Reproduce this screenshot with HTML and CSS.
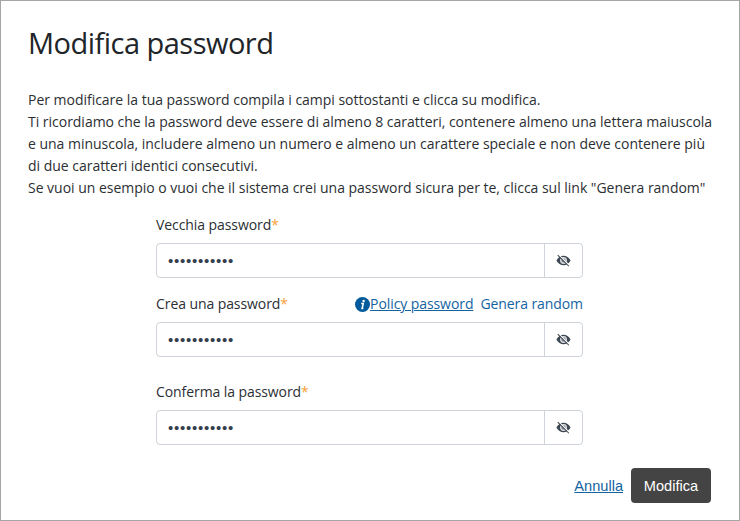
FILE: index.html
```html
<!DOCTYPE html>
<html lang="it">

<head>
  <meta charset="UTF-8">
  <meta name="viewport" content="width=device-width, initial-scale=1.0">
  <title>Modifica password</title>
  <link rel="stylesheet" href="styles.css">
</head>

<body>
  <svg class="sprite" xmlns="http://www.w3.org/2000/svg">
    <symbol id="eye-slash" viewBox="0 0 16 14">
      <path d="M0.4 7C3.6 0.2 12.4 0.2 15.6 7C12.4 13.8 3.6 13.8 0.4 7Z" fill="#3d4653"/>
      <circle cx="8" cy="7" r="3.7" fill="#dfe1e4"/>
      <circle cx="8" cy="7" r="2.4" fill="#8b9097"/>
      <path d="M2.6 0.6L14.4 12.4" stroke="#fff" stroke-width="1.2"/>
      <path d="M1.8 1.2L13.8 13.2" stroke="#3d4653" stroke-width="1.1"/>
    </symbol>
  </svg>

  <main class="page">
    <h1>Modifica password</h1>
    <p class="intro">
      Per modificare la tua password compila i campi sottostanti e clicca su modifica.<br>
      Ti ricordiamo che la password deve essere di almeno 8 caratteri, contenere almeno una lettera maiuscola<br>
      e una minuscola, includere almeno un numero e almeno un carattere speciale e non deve contenere più<br>
      di due caratteri identici consecutivi.<br>
      Se vuoi un esempio o vuoi che il sistema crei una password sicura per te, clicca sul link "Genera random"
    </p>

    <form class="form">
      <div class="field">
        <div class="field-head">
          <label for="old">Vecchia password<span class="required">*</span></label>
        </div>
        <div class="input-group">
          <input type="password" id="old" value="password123">
          <button type="button" class="toggle"><svg class="eye"><use href="#eye-slash"/></svg></button>
        </div>
      </div>

      <div class="field field-new">
        <div class="field-head">
          <label for="new">Crea una password<span class="required">*</span></label>
          <div class="links">
            <svg class="info" viewBox="0 0 16 16">
              <circle cx="8" cy="8" r="8" fill="#005a9c"/>
              <circle cx="9.2" cy="4.2" r="1.3" fill="#fff"/>
              <path d="M6.6 7H8.8L7.6 12.3H8.9" fill="none" stroke="#fff" stroke-width="1.7"/>
            </svg>
            <a href="#" class="policy">Policy password</a>
            <a href="#" class="random">Genera random</a>
          </div>
        </div>
        <div class="input-group">
          <input type="password" id="new" value="password123">
          <button type="button" class="toggle"><svg class="eye"><use href="#eye-slash"/></svg></button>
        </div>
      </div>

      <div class="field">
        <div class="field-head">
          <label for="confirm">Conferma la password<span class="required">*</span></label>
        </div>
        <div class="input-group">
          <input type="password" id="confirm" value="password123">
          <button type="button" class="toggle"><svg class="eye"><use href="#eye-slash"/></svg></button>
        </div>
      </div>
    </form>

    <div class="actions">
      <a href="#" class="cancel">Annulla</a>
      <button type="submit" class="submit">Modifica</button>
    </div>
  </main>
</body>

</html>
```
FILE: styles.css
```css
* {
  box-sizing: border-box;
}

body {
  margin: 0;
  font-family: "Open Sans", "Noto Sans", sans-serif;
  font-size: 14px;
  line-height: 22px;
  color: #2b2f33;
  background: #fff;
}

.sprite {
  display: none;
}

.page {
  height: 521px;
  padding: 25px 28px 0 27px;
  border: 1px solid #a6a6a6;
}

h1 {
  margin: 0;
  font-size: 29px;
  font-weight: 400;
  line-height: 34px;
  letter-spacing: -0.52px;
  color: #212529;
}

.intro {
  margin: 29px 0 0;
  letter-spacing: -0.02px;
  white-space: nowrap;
}

.form {
  width: 427px;
  margin: 15px 0 0 128px;
}

.field {
  margin-bottom: 15px;
}

.field-new {
  margin-bottom: 24px;
}

.field-head {
  display: flex;
  justify-content: space-between;
  height: 22px;
  margin-bottom: 7px;
  letter-spacing: -0.08px;
}

.required {
  color: #f7a13a;
}

.links {
  display: flex;
  align-items: center;
}

.info {
  width: 15px;
  height: 15px;
}

a {
  color: #1463a1;
}

.random {
  margin-left: 7px;
  text-decoration: none;
}

.input-group {
  display: flex;
  height: 35px;
  border: 1px solid #ced4da;
  border-radius: 4px;
}

.input-group input {
  flex: 1;
  min-width: 0;
  padding: 0 11px;
  border: 0;
  background: none;
  font-family: "Liberation Sans", Arial, sans-serif;
  font-size: 15px;
  letter-spacing: 0.75px;
  color: #343f4d;
}

.toggle {
  display: flex;
  align-items: center;
  justify-content: center;
  width: 38px;
  padding: 0;
  border: 0;
  border-left: 1px solid #ced4da;
  background: none;
}

.eye {
  width: 15px;
  height: 13px;
}

.actions {
  display: flex;
  justify-content: flex-end;
  align-items: center;
  gap: 8px;
  margin-top: 23px;
  font-family: "Liberation Sans", Arial, sans-serif;
  font-size: 14.6px;
}

.submit {
  width: 80px;
  height: 35px;
  padding: 0;
  border: 0;
  border-radius: 4px;
  background: #444;
  color: #fff;
  font-family: inherit;
  font-size: inherit;
}
```
